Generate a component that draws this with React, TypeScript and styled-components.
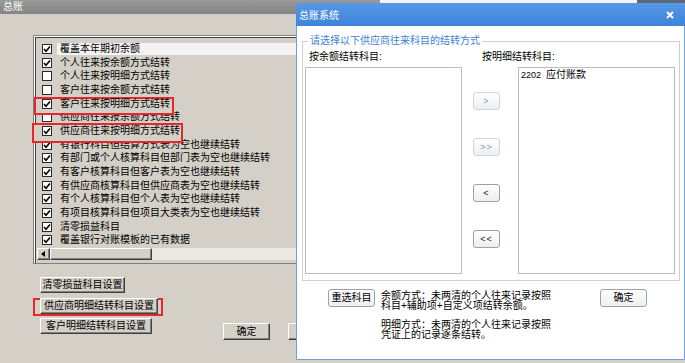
import styled, { createGlobalStyle } from "styled-components";

const GlobalStyle = createGlobalStyle`
  * { box-sizing: border-box; }
  html, body {
    margin: 0;
    padding: 0;
    width: 685px;
    height: 363px;
    overflow: hidden;
    background: #d4d0c8;
  }
  body {
    font-family: "Liberation Sans", "Noto Sans CJK SC", sans-serif;
    font-size: 10px;
    color: #000;
  }
`;

// options in the left window, true = checked
const options: [string, boolean][] = [
  ["覆盖本年期初余额", true],
  ["个人往来按余额方式结转", true],
  ["个人往来按明细方式结转", false],
  ["客户往来按余额方式结转", false],
  ["客户往来按明细方式结转", true],
  ["供应商往来按余额方式结转", false],
  ["供应商往来按明细方式结转", true],
  ["有银行科目但结算方式表为空也继续结转", true],
  ["有部门或个人核算科目但部门表为空也继续结转", true],
  ["有客户核算科目但客户表为空也继续结转", true],
  ["有供应商核算科目但供应商表为空也继续结转", true],
  ["有个人核算科目但个人表为空也继续结转", true],
  ["有项目核算科目但项目大类表为空也继续结转", true],
  ["清零损益科目", true],
  ["覆盖银行对账模板的已有数据", true],
];

// red annotation boxes, keyed by row index
const marks: Record<number, { l: number; t: number; w: number; h: number }> = {
  4: { l: -8, t: 0, w: 140, h: 18 },
  6: { l: -10, t: -1, w: 151, h: 20 },
};

function App() {
  return (
    <Screen>
      <GlobalStyle />
      <LeftWindow>
        <LeftTitle>总账</LeftTitle>
        <LeftBody>
          <OptionList>
            <Rows>
              {options.map(([label, checked], i) => {
                const m = marks[i];
                return (
                  <OptionRow key={label}>
                    {m && <Mark $l={m.l} $t={m.t} $w={m.w} $h={m.h} />}
                    <Check $raised={!!m}>
                      {checked && (
                        <svg width="8" height="8" viewBox="0 0 8 8">
                          <path
                            d="M1 4 L3 6.2 L7 1.6"
                            fill="none"
                            stroke="#000"
                            strokeWidth="1.6"
                          />
                        </svg>
                      )}
                    </Check>
                    <OptionText $raised={!!m} $focus={i === 0}>
                      {label}
                    </OptionText>
                  </OptionRow>
                );
              })}
            </Rows>
            <HScroll>
              <ScrollArrow />
              <ScrollThumb />
              <ScrollTrack />
            </HScroll>
          </OptionList>

          <BottomRow>
            <ButtonStack>
              <WinButton $w={85}>清零损益科目设置</WinButton>
              <MarkedWrap>
                <Mark $l={-7} $t={0.5} $w={130} $h={18} />
                <WinButton $w={118} $raised>
                  供应商明细结转科目设置
                </WinButton>
              </MarkedWrap>
              <WinButton $w={112}>客户明细结转科目设置</WinButton>
            </ButtonStack>
            <OkGroup>
              <WinButton $w={47} $h={17}>
                确定
              </WinButton>
              <WinButton $w={47} $h={17}>
                取消
              </WinButton>
            </OkGroup>
          </BottomRow>
        </LeftBody>
      </LeftWindow>

      <BackWindow $l={380} $w={257} $c="#f4f4f4" />
      <BackWindow $l={637} $w={48} $c="#5b6877" />

      {/* transfer dialog */}
      <Dialog>
        <DialogTitle>
          <span>总账系统</span>
          <svg width="8" height="8" viewBox="0 0 8 8">
            <path d="M1 1 L7 7 M7 1 L1 7" stroke="#fff" strokeWidth="2" />
          </svg>
        </DialogTitle>
        <DialogBody>
          <Group>
            <Legend>请选择以下供应商往来科目的结转方式</Legend>
            <ColumnLabels>
              <span>按余额结转科目:</span>
              <span>按明细结转科目:</span>
            </ColumnLabels>
            <Transfer>
              <SubjectList />
              <ArrowColumn>
                <ArrowButton $disabled>&gt;</ArrowButton>
                <ArrowButton $disabled>&gt;&gt;</ArrowButton>
                <ArrowButton>&lt;</ArrowButton>
                <ArrowButton>&lt;&lt;</ArrowButton>
              </ArrowColumn>
              <SubjectList>
                <SubjectItem>
                  <Code>2202</Code>应付账款
                </SubjectItem>
              </SubjectList>
            </Transfer>
          </Group>

          <Footer>
            <ActionButton>重选科目</ActionButton>
            <Notes>
              <NoteBlock>
                <span>余额方式：未两清的个人往来记录按照</span>
                <span>科目+辅助项+自定义项结转余额。</span>
              </NoteBlock>
              <NoteBlock>
                <span>明细方式：未两清的个人往来记录按照</span>
                <span>凭证上的记录逐条结转。</span>
              </NoteBlock>
            </Notes>
            <OkButton>确定</OkButton>
          </Footer>
        </DialogBody>
      </Dialog>
    </Screen>
  );
}

export default App;

const Screen = styled.div`
  position: relative;
  width: 685px;
  height: 363px;
  overflow: hidden;
`;

// left window

const LeftWindow = styled.div`
  display: flex;
  flex-direction: column;
  width: 685px;
  height: 363px;
  background: #d4d0c8;
`;

const LeftTitle = styled.div`
  height: 14px;
  line-height: 14px;
  padding-left: 3px;
  color: #fff;
  background: linear-gradient(#9a9a9a, #848484);
`;

const LeftBody = styled.div`
  display: flex;
  flex-direction: column;
  padding: 21px 0 0 33px;
`;

const OptionList = styled.div`
  display: flex;
  flex-direction: column;
  width: 300px;
  height: 229px;
  border: 1px solid #808080;
  box-shadow: inset 1px 1px 0 #fff, inset 2px 2px 0 #404040;
`;

const Rows = styled.div`
  display: flex;
  flex-direction: column;
  padding: 6px 0 0 8px;
`;

const OptionRow = styled.div`
  position: relative;
  display: flex;
  align-items: center;
  height: 13.7px;
`;

const Mark = styled.span<{ $l: number; $t: number; $w: number; $h: number }>`
  position: absolute;
  left: ${(p) => p.$l}px;
  top: ${(p) => p.$t}px;
  width: ${(p) => p.$w}px;
  height: ${(p) => p.$h}px;
  border: 2px solid #e8262b;
  background: #d4d0c8;
  z-index: 3;
`;

const Check = styled.span<{ $raised?: boolean }>`
  position: relative;
  z-index: ${(p) => (p.$raised ? 4 : "auto")};
  display: grid;
  place-items: center;
  width: 10px;
  height: 10px;
  flex-shrink: 0;
  background: #fff;
  border: 1px solid #2a2a2a;
`;

const OptionText = styled.span<{ $raised?: boolean; $focus?: boolean }>`
  position: relative;
  z-index: ${(p) => (p.$raised ? 4 : "auto")};
  margin-left: 5px;
  padding-left: 3px;
  line-height: 12px;
  white-space: nowrap;
  flex: ${(p) => (p.$focus ? 1 : "none")};
  background: ${(p) => (p.$focus ? "#f3f3f3" : "transparent")};
`;

const HScroll = styled.div`
  display: flex;
  height: 12px;
  margin: auto 0 3px 3px;
`;

const raised = `
  background: #d4d0c8;
  border-top: 1px solid #fff;
  border-left: 1px solid #fff;
  border-bottom: 1px solid #404040;
  border-right: 1px solid #404040;
  box-shadow: inset -1px -1px 0 #808080;
`;

const ScrollArrow = styled.div`
  ${raised}
  position: relative;
  width: 13px;

  &::after {
    content: "";
    position: absolute;
    left: 3px;
    top: 2px;
    border-style: solid;
    border-width: 3px 4px 3px 0;
    border-color: transparent #000 transparent transparent;
  }
`;

const ScrollThumb = styled.div`
  ${raised}
  width: 102px;
`;

const ScrollTrack = styled.div`
  flex: 1;
  background: #ebe9e4;
`;

const BottomRow = styled.div`
  display: flex;
  align-items: flex-start;
  margin-top: 13px;
  padding-left: 7px;
`;

const ButtonStack = styled.div`
  display: flex;
  flex-direction: column;
  align-items: flex-start;
  gap: 4.5px;
`;

const MarkedWrap = styled.div`
  position: relative;
`;

const WinButton = styled.button<{ $w: number; $h?: number; $raised?: boolean }>`
  ${raised}
  position: relative;
  z-index: ${(p) => (p.$raised ? 4 : "auto")};
  width: ${(p) => p.$w}px;
  height: ${(p) => p.$h ?? 16}px;
  padding: 0;
  font: inherit;
  line-height: 12px;
  color: #000;
  white-space: nowrap;
`;

const OkGroup = styled.div`
  display: flex;
  gap: 18px;
  margin: 46px 0 0 65px;
`;

const BackWindow = styled.div<{ $l: number; $w: number; $c: string }>`
  position: absolute;
  top: 0;
  left: ${(p) => p.$l}px;
  width: ${(p) => p.$w}px;
  height: 3px;
  background: ${(p) => p.$c};
`;

// dialog

const Dialog = styled.div`
  position: absolute;
  left: 296px;
  top: 3px;
  width: 389px;
  height: 357px;
  display: flex;
  flex-direction: column;
  background: #fff;
  border: 1px solid #6ea0e0;
  border-radius: 3px 3px 0 0;
`;

const DialogTitle = styled.div`
  display: flex;
  align-items: center;
  justify-content: space-between;
  height: 23px;
  padding: 0 11px 0 3px;
  color: #fff;
  background: linear-gradient(#5699e8, #3e82da);
  margin: -1px -1px 0;
  border-radius: 3px 3px 0 0;
`;

const DialogBody = styled.div`
  display: flex;
  flex-direction: column;
  padding: 9px 4px 0 5px;
`;

const Group = styled.fieldset`
  margin: 0;
  min-width: 0;
  padding: 0 4px 6px 2px;
  border: 1px solid #c9d0da;
`;

const Legend = styled.legend`
  margin-left: 3px;
  padding: 0 2px;
  line-height: 12px;
  color: #3e7fd6;
`;

const ColumnLabels = styled.div`
  display: grid;
  grid-template-columns: 177px 1fr;
  margin-top: 4px;
  line-height: 12px;

  & > span:first-child {
    padding-left: 4px;
  }
`;

const Transfer = styled.div`
  display: flex;
  height: 207px;
  margin-top: 4px;
`;

const SubjectList = styled.div`
  width: 157px;
  padding: 1px 2px;
  background: #fff;
  border: 1px solid #b9bec6;
`;

const SubjectItem = styled.div`
  line-height: 12px;
  white-space: nowrap;
`;

const Code = styled.span`
  font-size: 9px;
  margin-right: 5px;
`;

const ArrowColumn = styled.div`
  width: 56px;
  display: flex;
  flex-direction: column;
  gap: 28px;
  padding: 25px 0 0 11px;
`;

const ArrowButton = styled.button<{ $disabled?: boolean }>`
  width: 27px;
  height: 18px;
  padding: 0;
  font: 9px "Liberation Sans", sans-serif;
  letter-spacing: 1px;
  color: ${(p) => (p.$disabled ? "#8c98ab" : "#222")};
  background: linear-gradient(#ffffff, #eceef1);
  border: 1px solid ${(p) => (p.$disabled ? "#cfd4db" : "#9ba1a9")};
  border-radius: 3px;
`;

const Footer = styled.div`
  display: flex;
  align-items: flex-start;
  margin-top: 8px;
  padding-left: 26px;
`;

const ActionButton = styled.button`
  width: 47px;
  height: 18px;
  padding: 0;
  font: inherit;
  line-height: 12px;
  color: #000;
  background: linear-gradient(#ffffff, #eceef1);
  border: 1px solid #9ba1a9;
  border-radius: 3px;
`;

const OkButton = styled(ActionButton)`
  margin-left: 49px;
`;

const Notes = styled.div`
  display: flex;
  flex-direction: column;
  gap: 9px;
  margin: 2px 0 0 6px;
`;

const NoteBlock = styled.div`
  display: flex;
  flex-direction: column;
  line-height: 10px;
  white-space: nowrap;
`;
